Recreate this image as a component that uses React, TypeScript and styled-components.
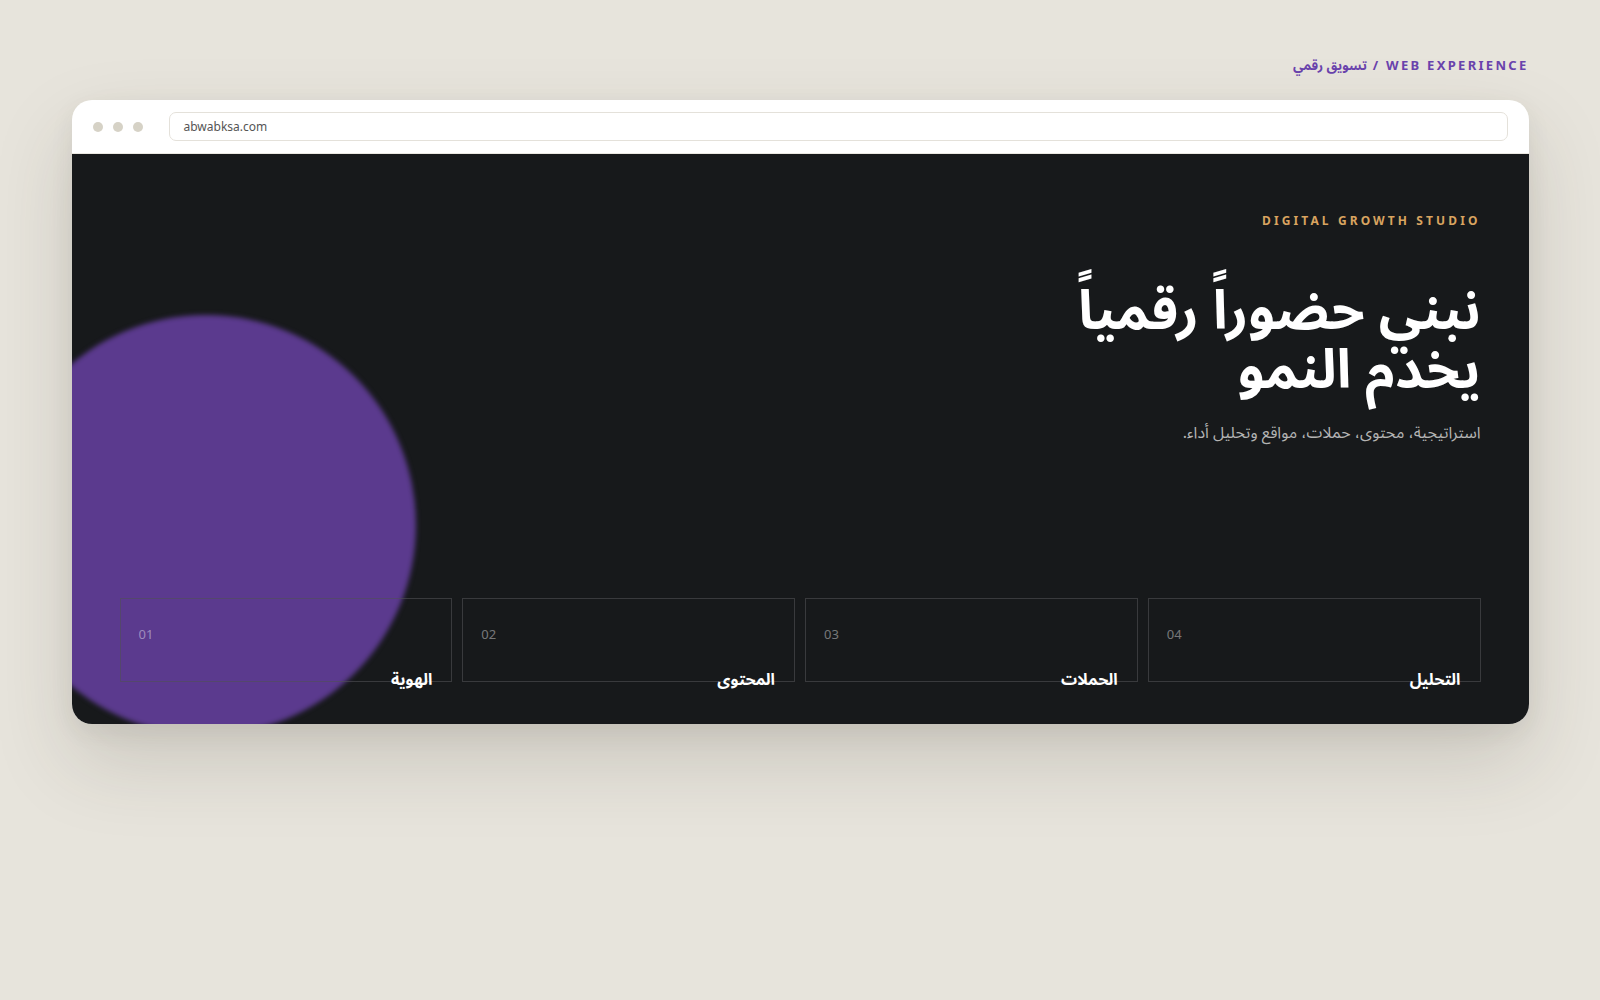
import React from 'react'
import styled, { createGlobalStyle } from 'styled-components'

const GlobalStyle = createGlobalStyle`
  html, body {
    margin: 0;
    padding: 0;
    background: #e7e4dc;
  }
  body {
    font-family: 'Noto Sans', 'Noto Sans Arabic', 'DejaVu Sans', sans-serif;
  }
  * {
    box-sizing: border-box;
  }
`

const services = [
  { num: '01', title: 'الهوية' },
  { num: '02', title: 'المحتوى' },
  { num: '03', title: 'الحملات' },
  { num: '04', title: 'التحليل' },
]

export default function App() {
  return (
    <>
      <GlobalStyle />
      <Page>
        <TopLabel dir='rtl'>WEB EXPERIENCE / تسويق رقمي</TopLabel>
        <Window>
          <ChromeBar>
            <Dots>
              <Dot />
              <Dot />
              <Dot />
            </Dots>
            <UrlBar>abwabksa.com</UrlBar>
          </ChromeBar>
          <Hero dir='rtl'>
            <Blob />
            <HeroText>
              <Eyebrow>DIGITAL GROWTH STUDIO</Eyebrow>
              <Title>
                نبني حضوراً رقمياً
                <br />
                يخدم النمو
              </Title>
              <Lead>استراتيجية، محتوى، حملات، مواقع وتحليل أداء.</Lead>
            </HeroText>
            <Cards dir='ltr'>
              {services.map(s => (
                <Card key={s.num}>
                  <CardNum>{s.num}</CardNum>
                  <CardTitle dir='rtl'>{s.title}</CardTitle>
                </Card>
              ))}
            </Cards>
          </Hero>
        </Window>
      </Page>
    </>
  )
}

const Page = styled.div`
  min-height: 1000px;
  max-width: 1457px;
  margin: 0 auto;
  padding-top: 55px;
  display: flex;
  flex-direction: column;
`

const TopLabel = styled.div`
  align-self: flex-end;
  color: #6a43ad;
  font-size: 13px;
  font-weight: 700;
  letter-spacing: 2.3px;
  line-height: 20px;
  margin-bottom: 25px;
`

const Window = styled.div`
  background: #ffffff;
  border-radius: 20px;
  overflow: hidden;
  box-shadow: 0 36px 80px rgba(60, 55, 40, 0.17), 0 8px 24px rgba(60, 55, 40, 0.07);
`

const ChromeBar = styled.div`
  height: 54px;
  display: flex;
  align-items: center;
  padding: 0 21px;
  gap: 26px;
  border-bottom: 1px solid #ebe8e1;
`

const Dots = styled.div`
  display: flex;
  gap: 10px;
`

const Dot = styled.span`
  width: 10px;
  height: 10px;
  border-radius: 50%;
  background: #d6d2c6;
`

const UrlBar = styled.div`
  flex: 1;
  height: 29px;
  border: 1px solid #e4e1da;
  border-radius: 7px;
  padding: 0 14px;
  display: flex;
  align-items: center;
  font-size: 12px;
  color: #555555;
`

const Hero = styled.div`
  position: relative;
  overflow: hidden;
  height: 570px;
  background: #17191b;
  padding: 57px 48px 42px;
  display: flex;
  flex-direction: column;
`

const Blob = styled.div`
  position: absolute;
  left: -76px;
  top: 161px;
  width: 420px;
  height: 420px;
  border-radius: 50%;
  background: #5b3a8e;
  filter: blur(2.5px);
`

const HeroText = styled.div`
  position: relative;
  display: flex;
  flex-direction: column;
  align-items: flex-start;
`

const Eyebrow = styled.div`
  color: #d9a460;
  font-size: 12px;
  font-weight: 700;
  letter-spacing: 3.1px;
  line-height: 20px;
`

const Title = styled.h1`
  margin: 48px 0 0;
  color: #ffffff;
  font-size: 54px;
  font-weight: 700;
  line-height: 59px;
`

const Lead = styled.p`
  margin: 23px 0 0;
  color: #b4b4b4;
  font-size: 16px;
  line-height: 25px;
`

const Cards = styled.div`
  position: relative;
  margin-top: auto;
  display: grid;
  grid-template-columns: repeat(4, 1fr);
  gap: 10px;
`

const Card = styled.div`
  height: 84px;
  border: 1px solid rgba(80, 80, 85, 0.6);
  padding: 25px 19px 0 18px;
  display: flex;
  flex-direction: column;
`

const CardNum = styled.span`
  align-self: flex-start;
  color: rgba(255, 255, 255, 0.42);
  font-size: 13px;
  line-height: 21px;
`

const CardTitle = styled.span`
  align-self: flex-end;
  margin-top: 21px;
  color: #ffffff;
  font-size: 16px;
  font-weight: 700;
  line-height: 26px;
  white-space: nowrap;
`
